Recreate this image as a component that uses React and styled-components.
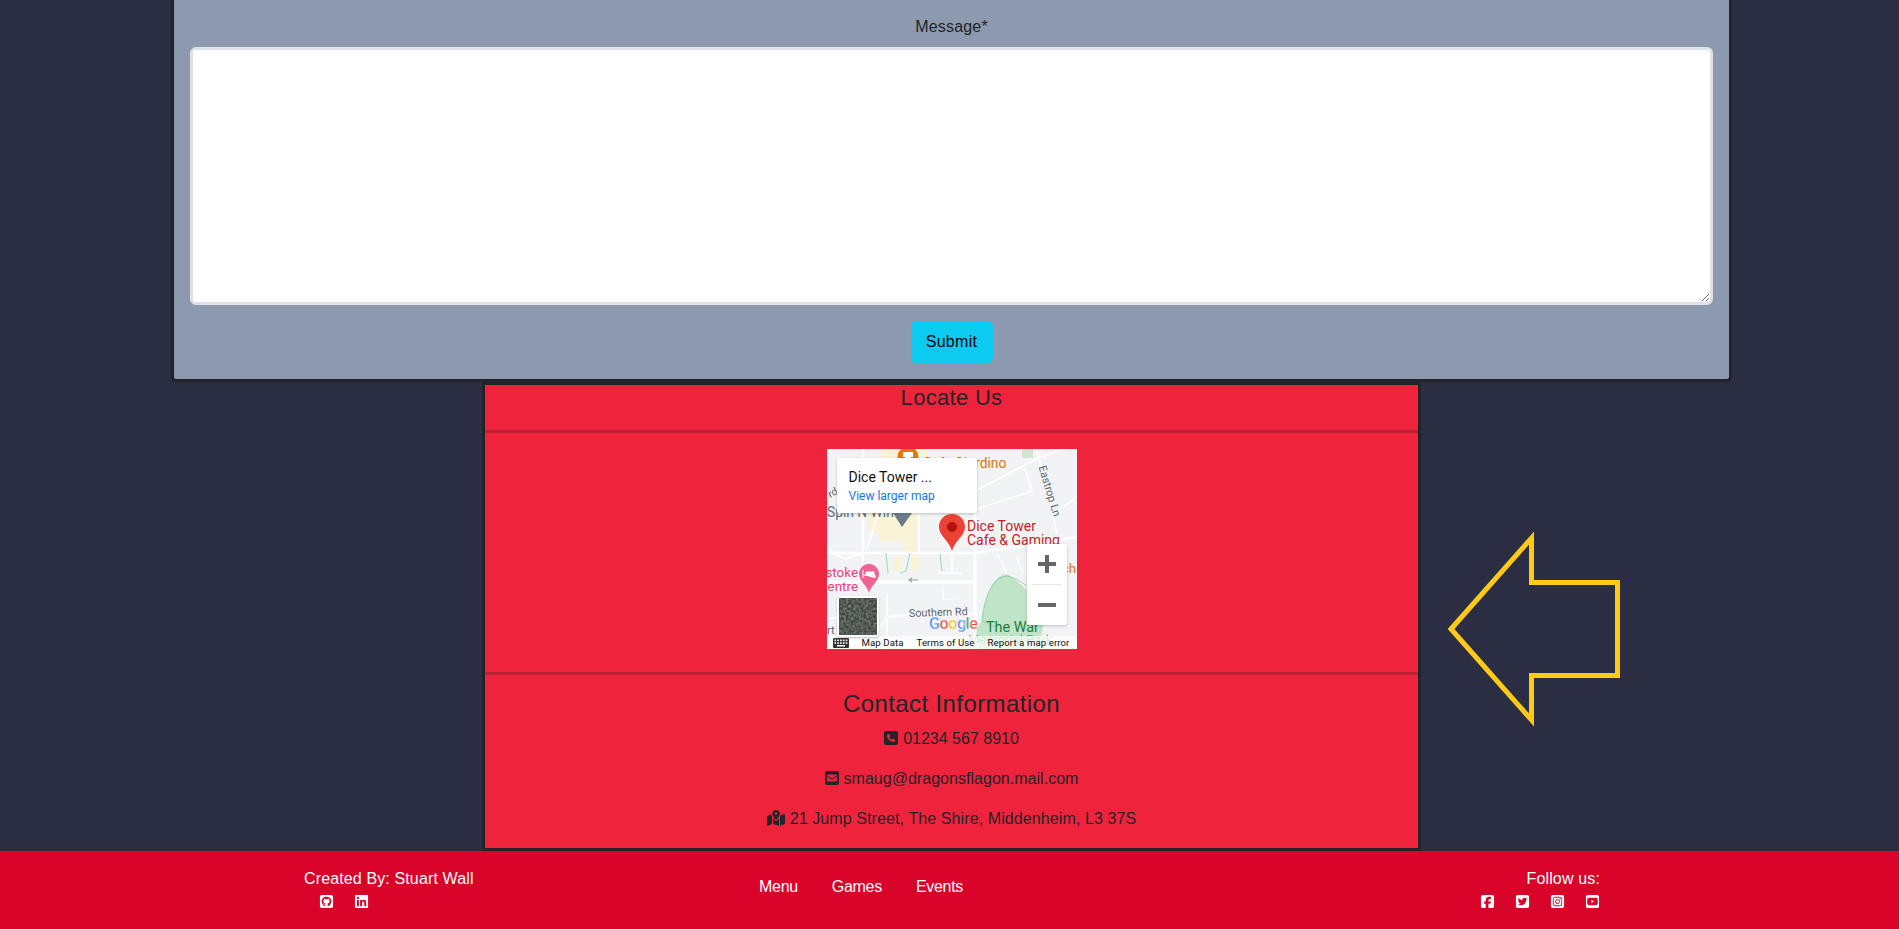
import React from "react";
import styled, { createGlobalStyle } from "styled-components";
import {
  FaSquarePhone,
  FaSquareEnvelope,
  FaMapLocationDot,
  FaSquareGithub,
  FaLinkedin,
  FaSquareFacebook,
  FaSquareTwitter,
  FaSquareInstagram,
  FaSquareYoutube,
} from "react-icons/fa6";

const GlobalStyle = createGlobalStyle`
  html, body {
    margin: 0;
    padding: 0;
    background: #2b2d42;
    font-family: "Liberation Sans", Arial, sans-serif;
    color: #212529;
  }
  * { box-sizing: border-box; }
`;

const Page = styled.div`
  position: relative;
  height: 929px;
  overflow: hidden;
  display: flex;
  flex-direction: column;
`;

const Main = styled.main`
  flex: 1;
  padding-left: 4px;
  display: flex;
  flex-direction: column;
  align-items: center;
`;

const FormCard = styled.form`
  width: 1561px;
  height: 382px;
  background: #8d99ae;
  border: 3px solid #212529;
  border-top: none;
  border-radius: 0 0 5px 5px;
  padding: 15px 16px 0;
  display: flex;
  flex-direction: column;
  align-items: center;
`;

const Label = styled.label`
  font-size: 16px;
  line-height: 24px;
  margin-bottom: 8px;
  letter-spacing: 0.2px;
`;

const MessageBox = styled.textarea`
  display: block;
  width: 100%;
  height: 258px;
  flex: none;
  background: #fff;
  border: 3px solid #dee2e6;
  border-radius: 6px;
  outline: none;
  resize: vertical;
`;

const SubmitButton = styled.button`
  margin-top: 16px;
  width: 82px;
  height: 42px;
  border: none;
  border-radius: 5px;
  background: #0dcaf0;
  color: #000;
  font-family: inherit;
  font-size: 16px;
  letter-spacing: 0.3px;
`;

const LocatePanel = styled.section`
  width: 939px;
  height: 469px;
  background: #ef233c;
  border: 3px solid #212529;
`;

const PanelHead = styled.div`
  height: 48px;
  border-bottom: 3px solid #bb2034;
  text-align: center;
`;

const PanelTitle = styled.h2`
  margin: 0;
  font-size: ${(p) => p.$size || 24}px;
  line-height: ${(p) => p.$lineHeight || 27}px;
  font-weight: 400;
  letter-spacing: ${(p) => p.$spacing || 0}px;
`;

const MapRow = styled.div`
  height: 242px;
  padding-top: 16px;
  border-bottom: 3px solid #bb2034;
  display: flex;
  justify-content: center;
`;

const MapFrame = styled.div`
  position: relative;
  width: 250px;
  height: 200px;
  overflow: hidden;
  background: #f1f3f4;
  font-family: Roboto, Arial, sans-serif;
`;

const MapPopup = styled.div`
  position: absolute;
  left: 10px;
  top: 9px;
  width: 140px;
  height: 55px;
  padding: 11px 12px;
  background: #fff;
  box-shadow: 0 1px 3px rgba(60, 64, 67, 0.3);
  border-radius: 2px;
`;

const PopupTitle = styled.div`
  font-size: 14px;
  line-height: 17px;
  font-weight: 400;
  color: #111;
`;

const PopupLink = styled.div`
  margin-top: 3px;
  font-size: 12px;
  line-height: 14px;
  color: #1a73e8;
`;

const ZoomControl = styled.div`
  position: absolute;
  left: 200px;
  top: 95px;
  width: 40px;
  height: 81px;
  background: #fff;
  border-radius: 2px;
  box-shadow: 0 1px 3px rgba(60, 64, 67, 0.3);
  display: flex;
  flex-direction: column;
  align-items: center;
`;

const ZoomButton = styled.div`
  height: 40px;
  display: flex;
  align-items: center;
  justify-content: center;
`;

const ZoomRule = styled.div`
  width: 30px;
  height: 1px;
  background: #e6e6e6;
`;

const SatelliteThumb = styled.div`
  position: absolute;
  left: 10px;
  top: 147px;
  width: 42px;
  height: 41px;
  border: 2px solid #fff;
  border-radius: 2px;
  overflow: hidden;
  box-shadow: 0 1px 2px rgba(60, 64, 67, 0.3);
  background: #3f463f;
`;

const Attribution = styled.div`
  position: absolute;
  left: 0;
  right: 0;
  bottom: 0;
  height: 13px;
  display: flex;
  align-items: center;
  font-size: 9.6px;
  line-height: 13px;
  color: #111;
  white-space: nowrap;
  background: rgba(255, 255, 255, 0.72);
`;

const AttributionItem = styled.span`
  margin-left: ${(p) => p.$gap}px;
  letter-spacing: 0.1px;
`;

const ContactBlock = styled.div`
  padding-top: 15px;
  text-align: center;
`;

const ContactLine = styled.p`
  margin: 0 0 16px;
  font-size: 16px;
  line-height: 24px;
  letter-spacing: ${(p) => p.$spacing || 0}px;
  &:first-of-type {
    margin-top: 10px;
  }
  svg {
    width: ${(p) => p.$iconWidth || 14}px;
    height: 16px;
    vertical-align: -2px;
    margin-right: 5px;
  }
`;

const Footer = styled.footer`
  height: 78px;
  flex: none;
  background: #d90429;
  color: #fff;
  padding: 17px 299px 0 304px;
  display: grid;
  grid-template-columns: 455px 1fr auto;
`;

const FooterText = styled.div`
  font-size: 16px;
  line-height: 22px;
  white-space: nowrap;
  letter-spacing: ${(p) => p.$spacing || 0}px;
`;

const IconRow = styled.div`
  margin-top: 4px;
  display: flex;
  gap: ${(p) => p.$gap}px;
  padding-left: ${(p) => p.$inset || 0}px;
  svg {
    width: 15px;
    height: 15px;
    display: block;
  }
`;

const FooterNav = styled.nav`
  display: flex;
  gap: 34px;
  padding-top: 7px;
  font-size: 16px;
  line-height: 24px;
  letter-spacing: -0.3px;
`;

const FooterRight = styled.div`
  display: flex;
  flex-direction: column;
  align-items: flex-end;
`;

const ArrowMark = styled.svg`
  position: absolute;
  left: 1440px;
  top: 525px;
`;

const MapArt = () => (
  <svg width="250" height="200" viewBox="0 0 250 200" style={{ display: "block" }}>
    <defs>
      <filter id="sat" x="0" y="0" width="100%" height="100%">
        <feTurbulence type="fractalNoise" baseFrequency="0.4" numOctaves="2" seed="4" />
        <feColorMatrix values="0 0 0 0 0.4  0 0 0 0 0.44  0 0 0 0 0.4  1.1 0 0 0 -0.35" />
      </filter>
    </defs>
    {/* buildings */}
    <g fill="#fbf3d6">
      <path d="M55 0H100V10H55Z" />
      <path d="M40 64H92V80H88V104H76V92H52V84H42Z" />
      <path d="M66 108H74V122H66Z" />
      <path d="M84 105H92V122H84Z" />
    </g>
    <path d="M195 0H206V9H195Z" fill="#c9e8cf" />
    {/* park */}
    <path d="M180 125C165 126 157 150 155 172L149 180L143 200H212L216 178C218 165 205 140 180 125Z" fill="#c0e4c8" />
    <path d="M155 172C157 150 165 128 180 127C192 129 205 140 212 150M155 172L168 178" fill="none" stroke="#86c99a" strokeWidth="0.8" />
    {/* roads */}
    <g fill="none" stroke="#fff" strokeLinecap="round" strokeLinejoin="round">
      <path strokeWidth="2.5" d="M0 104H148L250 88" />
      <path strokeWidth="3" d="M0 133H146" />
      <path strokeWidth="3" d="M148 60V200" />
      <path strokeWidth="2.5" d="M36 0V120" />
      <path strokeWidth="2.5" d="M60 168L90 165H148" />
      <path strokeWidth="2" d="M150 41L213 8M213 8L250 -4" />
      <path strokeWidth="1.6" d="M198 20L205 42L150 60" />
      <path strokeWidth="1.6" d="M210 1L230 84M250 48L228 64" />
      <path strokeWidth="1.6" d="M0 100L18 110L36 104M0 44L36 30" />
      <path strokeWidth="1.6" d="M125 104V123M112 124H135M92 64V104M52 62L40 100" />
      <path strokeWidth="1.6" d="M60 146V200M60 168L52 180M0 170L14 168" />
      <path strokeWidth="1.2" d="M116 140V150M116 150H132M170 104L180 125M190 108L196 125" />
    </g>
    <g fill="none" stroke="#86cf96" strokeWidth="0.8">
      <path d="M59 104L61 124M83 104L79 122L73 124M113 105L115 122" />
    </g>
    <path d="M91 131H82M85 129L82 131L85 133" fill="none" stroke="#9aa0a6" strokeWidth="1.2" />
    {/* labels */}
    <g fontFamily="Roboto, Arial, sans-serif">
      <circle cx="81" cy="8" r="10.5" fill="#e8780c" />
      <path d="M76 3H86V8H84V13H78V8H76Z" fill="#fff" />
      <text x="96" y="19" fontSize="13.8" fill="#e37400">Cafe Giardino</text>
      <text x="0" y="68" fontSize="13.8" fill="#5b7080">Spin N Win</text>
      <text x="1" y="48" fontSize="10.5" fill="#5f6368" transform="rotate(-28 4 44)">rd</text>
      <path d="M66 64H85L75 78Z" fill="#6b7d8a" />
      <text x="210" y="20" fontSize="11" fill="#5f6368" transform="rotate(73 212 20)">Eastrop Ln</text>
      <path d="M125 65C117 65 112 71 112 78C112 87 122 91 125 102C128 91 138 87 138 78C138 71 133 65 125 65Z" fill="#ea4335" />
      <circle cx="125" cy="78" r="5" fill="#b3140f" />
      <text x="140" y="82" fontSize="14" fill="#c5221f">Dice Tower</text>
      <text x="140" y="96" fontSize="14" fill="#c5221f">Cafe &amp; Gaming</text>
      <text x="249" y="124" textAnchor="end" fontSize="13.2" fill="#e37400">ch</text>
      <text x="31" y="128" textAnchor="end" fontSize="13.4" fill="#ec407a">stoke</text>
      <text x="31" y="142" textAnchor="end" fontSize="13.4" fill="#ec407a">entre</text>
      <path d="M42 115C36 115 32 120 32 125C32 132 40 136 42 144C44 136 52 132 52 125C52 120 48 115 42 115Z" fill="#f06292" />
      <path d="M36 121V129M36 126H48V129M39 123H47V126H39Z" fill="#fff" stroke="#fff" strokeWidth="1" />
      <text x="82" y="168" fontSize="10.8" fill="#5f6368" transform="rotate(-2 82 168)">Southern Rd</text>
      <text x="0" y="185" fontSize="11" fill="#5f6368">rt</text>
      <text x="159" y="183" fontSize="14.4" fill="#188038">The War</text>
      <text x="141" y="195" fontSize="13" fill="#188038" opacity="0.5">Memorial Park</text>
      <text x="102" y="180" fontSize="16" fontWeight="500" stroke="#fff" strokeWidth="0.3" letterSpacing="-0.4">
        <tspan fill="#4285f4">G</tspan>
        <tspan fill="#ea4335">o</tspan>
        <tspan fill="#fbbc05">o</tspan>
        <tspan fill="#4285f4">g</tspan>
        <tspan fill="#34a853">l</tspan>
        <tspan fill="#ea4335">e</tspan>
      </text>
    </g>
  </svg>
);

const SatelliteArt = () => (
  <svg width="38" height="37" viewBox="0 0 38 37" style={{ display: "block" }}>
    <rect width="38" height="37" filter="url(#sat)" />
  </svg>
);

const KeyboardIcon = () => (
  <svg width="16" height="10" viewBox="0 0 16 10" style={{ marginLeft: 6, flex: "none" }}>
    <rect width="16" height="10" rx="1" fill="#333" />
    <g fill="#fff">
      {[0, 1, 2, 3, 4].map((i) => (
        <rect key={`a${i}`} x={1.5 + i * 2.8} y="1.5" width="1.6" height="1.6" />
      ))}
      {[0, 1, 2, 3, 4].map((i) => (
        <rect key={`b${i}`} x={1.5 + i * 2.8} y="4.2" width="1.6" height="1.6" />
      ))}
      <rect x="4" y="7" width="8" height="1.5" />
    </g>
  </svg>
);

const ZoomGlyph = ({ plus }) => (
  <svg width="18" height="18" viewBox="0 0 18 18">
    <rect x="0" y="7" width="18" height="4" fill="#666" />
    {plus && <rect x="7" y="0" width="4" height="18" fill="#666" />}
  </svg>
);

const App = () => (
  <Page>
    <GlobalStyle />
    <Main>
      <FormCard onSubmit={(e) => e.preventDefault()}>
        <Label htmlFor="message">Message*</Label>
        <MessageBox id="message" />
        <SubmitButton type="submit">Submit</SubmitButton>
      </FormCard>
      <LocatePanel>
        <PanelHead>
          <PanelTitle $size={22} $lineHeight={25} $spacing={0.3}>Locate Us</PanelTitle>
        </PanelHead>
        <MapRow>
          <MapFrame>
            <MapArt />
            <MapPopup>
              <PopupTitle>Dice Tower ...</PopupTitle>
              <PopupLink>View larger map</PopupLink>
            </MapPopup>
            <ZoomControl>
              <ZoomButton><ZoomGlyph plus /></ZoomButton>
              <ZoomRule />
              <ZoomButton><ZoomGlyph /></ZoomButton>
            </ZoomControl>
            <Attribution>
              <KeyboardIcon />
              <AttributionItem $gap={13}>Map Data</AttributionItem>
              <AttributionItem $gap={13}>Terms of Use</AttributionItem>
              <AttributionItem $gap={13}>Report a map error</AttributionItem>
            </Attribution>
            <SatelliteThumb><SatelliteArt /></SatelliteThumb>
          </MapFrame>
        </MapRow>
        <ContactBlock>
          <PanelTitle $spacing={0.4}>Contact Information</PanelTitle>
          <ContactLine>
            <FaSquarePhone />01234 567 8910
          </ContactLine>
          <ContactLine $spacing={0.03}>
            <FaSquareEnvelope />smaug@dragonsflagon.mail.com
          </ContactLine>
          <ContactLine $spacing={0.1} $iconWidth={18}>
            <FaMapLocationDot />21 Jump Street, The Shire, Middenheim, L3 37S
          </ContactLine>
        </ContactBlock>
      </LocatePanel>
    </Main>
    <Footer>
      <div>
        <FooterText $spacing={0.13}>Created By: Stuart Wall</FooterText>
        <IconRow $gap={20} $inset={15}>
          <FaSquareGithub />
          <FaLinkedin />
        </IconRow>
      </div>
      <FooterNav>
        <span>Menu</span>
        <span>Games</span>
        <span>Events</span>
      </FooterNav>
      <FooterRight>
        <FooterText $spacing={0.15}>Follow us:</FooterText>
        <IconRow $gap={20}>
          <FaSquareFacebook />
          <FaSquareTwitter />
          <FaSquareInstagram />
          <FaSquareYoutube />
        </IconRow>
      </FooterRight>
    </Footer>
    <ArrowMark width="190" height="210" viewBox="0 0 190 210">
      <polygon
        points="11,104 91.5,13 91.5,57.5 177.5,57.5 177.5,150.5 91.5,150.5 91.5,195"
        fill="none"
        stroke="#ffc917"
        strokeWidth="5"
        strokeMiterlimit="10"
      />
    </ArrowMark>
  </Page>
);

export default App;
